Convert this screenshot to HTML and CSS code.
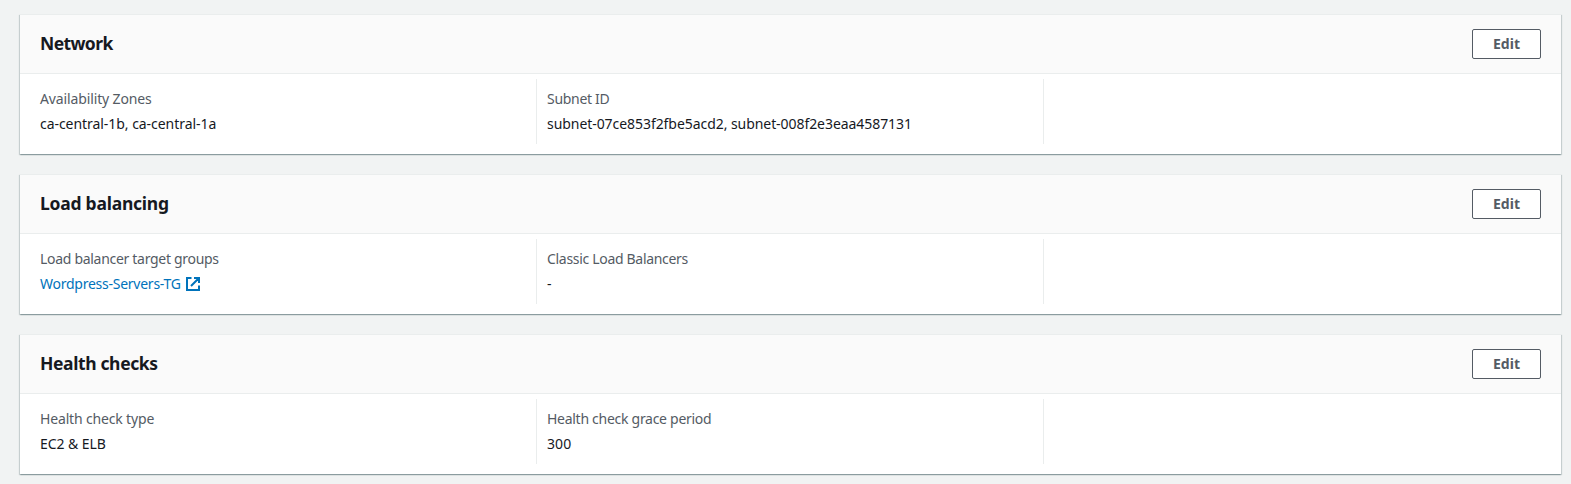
FILE: index.html
```html
<!DOCTYPE html>
<html lang="en">
<head>
<meta charset="utf-8">
<title>Auto Scaling group details</title>
<link rel="stylesheet" href="styles.css">
</head>
<body>
<main class="page">
  <section class="card">
    <header class="card-header"><h2 class="title"><span class="t-network">Network</span></h2><button class="button">Edit</button></header>
    <div class="columns">
      <div class="column"><div class="label"><span class="l-zones">Availability Zones</span></div><div class="value"><span class="v-zones">ca-central-1b, ca-central-1a</span></div></div>
      <div class="column"><div class="label"><span class="l-subnet">Subnet ID</span></div><div class="value"><span class="v-subnet">subnet-07ce853f2fbe5acd2, subnet-008f2e3eaa4587131</span></div></div>
      <div class="column"></div>
    </div>
  </section>
  <section class="card">
    <header class="card-header"><h2 class="title"><span class="t-load">Load balancing</span></h2><button class="button">Edit</button></header>
    <div class="columns">
      <div class="column"><div class="label"><span class="l-groups">Load balancer target groups</span></div><div class="value"><a class="link"><span class="v-groups">Wordpress-Servers-TG</span><svg class="external" viewBox="0 0 16 16"><path d="M6.500 2H2v12h12v-4.500M9 2h5v5M6 10l7.500-7.500"/></svg></a></div></div>
      <div class="column"><div class="label"><span class="l-classic">Classic Load Balancers</span></div><div class="value">-</div></div>
      <div class="column"></div>
    </div>
  </section>
  <section class="card">
    <header class="card-header"><h2 class="title"><span class="t-health">Health checks</span></h2><button class="button">Edit</button></header>
    <div class="columns">
      <div class="column"><div class="label"><span class="l-type">Health check type</span></div><div class="value"><span class="v-type">EC2 &amp; ELB</span></div></div>
      <div class="column"><div class="label"><span class="l-grace">Health check grace period</span></div><div class="value"><span class="v-grace">300</span></div></div>
      <div class="column"></div>
    </div>
  </section>
</main>
</body>
</html>
```
FILE: styles.css
```css
* { box-sizing: border-box; }
body {
  margin: 0;
  height: 484px;
  overflow: hidden;
  background: #f1f3f3;
  color: #16191f;
  font-family: "Noto Sans", sans-serif;
  font-size: 14px;
  line-height: 22px;
}
.page {
  display: flex;
  flex-direction: column;
  gap: 20px;
  padding: 14px 10px 0 20px;
}
.card {
  height: 140px;
  background: #fff;
  border-top: 1px solid #eaeded;
  box-shadow: 0 1px 1px 0 rgba(0,38,46,.2), 1px 1px 1px 0 rgba(0,38,46,.15), -1px 1px 1px 0 rgba(0,38,46,.15);
}
.card-header {
  display: flex;
  align-items: center;
  justify-content: space-between;
  height: 59px;
  padding: 0 20px;
  background: #fafafa;
  border-bottom: 1px solid #eaeded;
}
.title {
  margin: 0;
  padding-bottom: 3px;
  font-size: 17.5px;
  line-height: 22px;
  font-weight: 700;
}
.button {
  width: 69px;
  height: 30px;
  padding: 0;
  border: 1px solid #545b64;
  border-radius: 2px;
  background: #fff;
  color: #545b64;
  font: 700 14px/20px "Noto Sans", sans-serif;
}
.columns {
  display: grid;
  grid-template-columns: 506px 507px 1fr;
  padding: 5px 10px 0;
}
.column {
  height: 65px;
  padding: 9px 10px 0;
}
.column + .column { border-left: 1px solid #eaeded; }
.label { color: #545b64; height: 22px; margin-bottom: 3px; }
.value { height: 22px; white-space: nowrap; }
.link { display: flex; align-items: center; gap: 4px; color: #0073bb; }
.external {
  width: 16px;
  height: 16px;
  fill: none;
  stroke: #0073bb;
  stroke-width: 2;
}
.t-network { letter-spacing: -0.6px; }
.t-load { letter-spacing: -0.24px; }
.t-health { letter-spacing: -0.37px; }
.l-zones { letter-spacing: -0.13px; }
.v-zones { letter-spacing: -0.05px; }
.l-subnet { letter-spacing: -0.3px; }
.v-subnet { letter-spacing: -0.06px; }
.l-groups { letter-spacing: -0.3px; }
.v-groups { letter-spacing: -0.25px; }
.l-classic { letter-spacing: -0.31px; }
.l-type { letter-spacing: -0.16px; }
.v-type { letter-spacing: -0.07px; }
.l-grace { letter-spacing: -0.28px; }
.v-grace { letter-spacing: 0.1px; }
```
